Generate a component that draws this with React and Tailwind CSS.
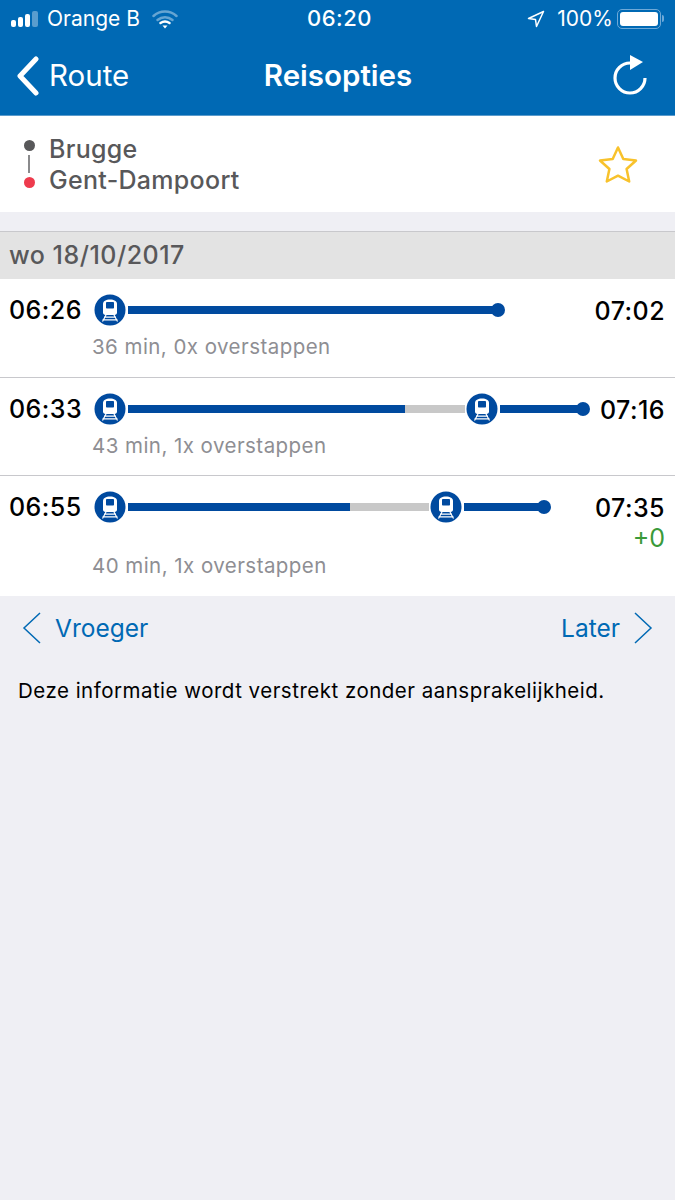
const font = { fontFamily: "Inter, 'Noto Sans', sans-serif" };

function TrainBadge() {
  return (
    <svg width="32" height="32" viewBox="0 0 32 32" className="shrink-0">
      <circle cx="16" cy="16" r="15.500" fill="#004a9f" />
      <path d="M9 10c0-3 3-4.500 7-4.500s7 1.500 7 4.500v8.500c0 1.500-1 2.500-2.500 2.500h-9C10 21 9 20 9 18.500z" fill="#fff" />
      <rect x="12" y="8" width="8" height="6.500" rx="0.800" fill="#004a9f" />
      <path d="M10 23.200h12M8.500 25.800h15M12 21l-3.500 6.500M20 21l3.500 6.500" stroke="#fff" strokeWidth="1.200" fill="none" />
    </svg>
  );
}

function Bar({ className }) {
  return <div className={`h-2 ${className}`} />;
}

function EndDot() {
  return <div className="w-3.5 h-3.5 rounded-full bg-[#004a9f] shrink-0 -ml-1" />;
}

function TripRow({ dep, arr, info, children, delay, className }) {
  return (
    <div className={`bg-white border-b border-[#c8c8cc] px-2.5 pt-[15px] ${className}`}>
      <div className="flex items-center h-8">
        <div className="w-[84px] shrink-0 -ml-px pt-px text-[25px] font-medium text-black tracking-[0.45px]">{dep}</div>
        <div className="flex items-center flex-1 ml-px">{children}</div>
        <div className="pt-px text-[25px] font-medium text-black tracking-[0.45px] leading-8">{arr}</div>
      </div>
      {delay && <div className="text-right text-[25px] leading-[30px] text-[#3a9a3a]">{delay}</div>}
      <div className={`pl-[82px] text-[20.500px] tracking-[0.45px] text-[#8e8e93] leading-7 ${delay ? "-mt-px" : "mt-[7px]"}`}>{info}</div>
    </div>
  );
}

export default function App() {
  return (
    <div style={font} className="w-[675px] h-[1200px] bg-[#efeff4] overflow-hidden">
      <div className="bg-[#0069b4] h-[116px] border-b border-[#5a9bcc] text-white">
        <div className="flex items-center justify-between h-9 pl-2.5 pr-[11px] pt-px text-[21px]">
          <div className="flex items-center w-[200px]">
            <svg width="30" height="20" viewBox="0 0 30 20" className="mr-[7px]">
              <rect x="1" y="11" width="5" height="7" rx="2" fill="#fff" />
              <rect x="8" y="8" width="5" height="10" rx="2" fill="#fff" />
              <rect x="15" y="5" width="5" height="13" rx="2" fill="#fff" />
              <rect x="22" y="2" width="6" height="16" rx="2" fill="#fff" fillOpacity="0.35" />
            </svg>
            <span>Orange B</span>
            <svg width="26" height="20" viewBox="0 0 26 20" className="ml-[12px]" fill="none" strokeLinecap="round">
              <path d="M1.500 7c6.500-6 16.500-6 23 0" stroke="#fff" strokeOpacity="0.4" strokeWidth="2.500" />
              <path d="M5.500 11c4.500-3.800 10.500-3.800 15 0" stroke="#fff" strokeOpacity="0.4" strokeWidth="2.500" />
              <path d="M8.500 14c3-2 6-2 9 0" stroke="#fff" strokeWidth="2.500" />
              <path d="M10.500 16.500h5L13 19.500z" fill="#fff" />
            </svg>
          </div>
          <div className="text-[22px] font-medium tracking-[0.5px] pl-[5px]">06:20</div>
          <div className="flex items-center justify-end w-[200px]">
            <svg width="18" height="18" viewBox="0 0 18 18" fill="none" className="mr-[12px]">
              <path d="M16.500 1.500 1.500 8.500l7 1 1 7z" stroke="#fff" strokeWidth="1.500" strokeLinejoin="round" />
            </svg>
            <span className="mr-[4px]">100%</span>
            <div className="w-[44px] h-[20px] border border-[#6ea9d8] rounded-[5px] p-[2px]">
              <div className="w-full h-full bg-white rounded-[3px]" />
            </div>
            <div className="w-[2px] h-[7px] bg-[#6ea9d8] ml-[1px] rounded-r-sm" />
          </div>
        </div>
        <div className="flex items-center justify-between h-[79px] pl-[16px] pr-[27px]">
          <div className="flex items-center w-[200px]">
            <svg width="24" height="40" viewBox="0 0 24 40" fill="none">
              <path d="M20 3 4 20l16 17" stroke="#fff" strokeWidth="5" strokeLinecap="round" strokeLinejoin="round" />
            </svg>
            <span className="ml-[9px] text-[29.500px]">Route</span>
          </div>
          <div className="text-[29.500px] font-semibold">Reisopties</div>
          <div className="w-[188px] flex justify-end">
            <svg width="36" height="42" viewBox="0 0 36 42" fill="none">
              <path d="M18 8A15 15 0 1 0 33 23" stroke="#fff" strokeWidth="3.200" />
              <path d="M18 0l13 7-13 8z" fill="#fff" />
            </svg>
          </div>
        </div>
      </div>

      <div className="bg-white h-[96px] flex items-center pl-[23px] pr-[36px] justify-between">
        <div className="flex items-center">
          <div className="flex flex-col items-center w-[12px] h-[48px] justify-between">
            <div className="w-[11px] h-[11px] rounded-full bg-[#58585a]" />
            <div className="w-[2px] h-[18px] bg-[#8a8a8c]" />
            <div className="w-[11px] h-[11px] rounded-full bg-[#ee3b4d]" />
          </div>
          <div className="ml-[14px] pt-px text-[25px] leading-[31px] font-medium text-[#58585a] tracking-[0.3px]">
            <div>Brugge</div>
            <div>Gent-Dampoort</div>
          </div>
        </div>
        <svg width="42" height="40" viewBox="0 0 42 40" fill="none">
          <path d="M21 3.500l5.300 11.600 12.700 1.400-9.400 8.500 2.600 12.500L21 31.700 9.800 37.500l2.600-12.500L3 16.500l12.700-1.400z" stroke="#f8c22c" strokeWidth="2.500" strokeLinejoin="round" />
        </svg>
      </div>

      <div className="h-[19px]" />

      <div className="bg-[#e3e3e3] h-[48px] border-t border-[#c8c8cc] flex items-center pl-[9px] text-[25px] font-medium text-[#58585a] tracking-[0.5px]">
        wo 18/10/2017
      </div>

      <TripRow dep="06:26" arr="07:02" info="36 min, 0x overstappen" className="h-[99px]">
        <TrainBadge />
        <Bar className="w-[367px] bg-[#004a9f] ml-[2px]" />
        <EndDot />
      </TripRow>

      <TripRow dep="06:33" arr="07:16" info="43 min, 1x overstappen" className="h-[98px]">
        <TrainBadge />
        <Bar className="w-[277px] bg-[#004a9f] ml-[2px]" />
        <Bar className="w-[60px] bg-[#c8c8c8]" />
        <div className="ml-[1px]"><TrainBadge /></div>
        <Bar className="w-[80px] bg-[#004a9f] ml-[2px]" />
        <EndDot />
      </TripRow>

      <TripRow dep="06:55" arr="07:35" delay="+0" info="40 min, 1x overstappen" className="h-[120px] border-b-0">
        <TrainBadge />
        <Bar className="w-[222px] bg-[#004a9f] ml-[2px]" />
        <Bar className="w-[79px] bg-[#c8c8c8]" />
        <div className="ml-[1px]"><TrainBadge /></div>
        <Bar className="w-[77px] bg-[#004a9f] ml-[2px]" />
        <EndDot />
      </TripRow>

      <div className="flex items-center justify-between h-[63px] pl-[22px] pr-[22px] text-[#0069b4] text-[24.500px]">
        <div className="flex items-center">
          <svg width="20" height="34" viewBox="0 0 20 34" fill="none">
            <path d="M18 2 2 17l16 15" stroke="#0069b4" strokeWidth="1.500" />
          </svg>
          <span className="ml-[13px] pt-0.5">Vroeger</span>
        </div>
        <div className="flex items-center">
          <span className="mr-[13px] pt-0.5">Later</span>
          <svg width="20" height="34" viewBox="0 0 20 34" fill="none">
            <path d="M2 2l16 15L2 32" stroke="#0069b4" strokeWidth="1.500" />
          </svg>
        </div>
      </div>

      <div className="pl-[18px] mt-[18px] text-[20.500px] tracking-[0.49px] leading-7 text-black whitespace-nowrap">
        Deze informatie wordt verstrekt zonder aansprakelijkheid.
      </div>
    </div>
  );
}
